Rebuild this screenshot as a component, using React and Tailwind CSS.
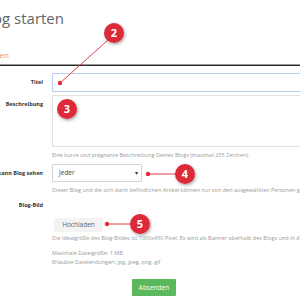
export default function App() {
  return (
    <div className="relative w-[300px] h-[300px] overflow-hidden bg-white text-[#555]" style={{ fontFamily: '"Open Sans", "Liberation Sans", sans-serif' }}>
      {/* page heading */}
      <div className="pt-[4px] h-[46px] flex w-[64px] justify-end">
        <h1 className="whitespace-nowrap text-[15px] leading-[28px] font-normal text-[#666]">Blog starten</h1>
      </div>
      <div className="flex w-[9px] justify-end h-[18px] items-center">
        <span className="whitespace-nowrap text-[8px] text-[#e98a74]">Eigenschaften</span>
      </div>
      <div className="border-t border-[#999] h-[2px] bg-[#2a2a2a]" />

      {/* form */}
      <div className="grid grid-cols-[43px_300px] gap-x-[9px] pt-[7px] text-[5.5px]">
        <Label className="h-[19px] items-center">Titel</Label>
        <div className="h-[19px] border border-[#b4cdf3] rounded-[1px]" />

        <Label className="mt-[3px] pt-[5px]">Beschreibung</Label>
        <div className="mt-[3px] h-[52px] border border-[#e2e2e2]" />

        <div />
        <p className="mt-[4px] leading-[8px] text-[#9a9a9a]">Eine kurze und prägnante Beschreibung Deines Blogs (maximal 255 Zeichen).</p>

        <Label className="mt-[5px] h-[18px] items-center">Wer kann Blog sehen</Label>
        <div className="mt-[5px] h-[18px] w-[90px] border border-[#d4d4d4] rounded-[1px] flex items-center justify-between pl-[6px] pr-[3px]">
          <span className="text-[6.5px] text-[#444]">Jeder</span>
          <span className="text-[6px] text-[#333]">▾</span>
        </div>

        <div />
        <p className="mt-[4px] leading-[8px] text-[#9a9a9a] whitespace-nowrap">Dieser Blog und die sich darin befindlichen Artikel können nur von den ausgewählten Personen gesehen werden.</p>

        <Label className="mt-[7px] h-[8px] items-center">Blog-Bild</Label>
        <div className="mt-[7px]" />

        <div />
        <div className="mt-[9px]">
          <button className="ml-[2px] w-[49px] h-[14px] bg-[#f3f3f3] text-[6.5px] text-[#666] rounded-[1px]">Hochladen</button>
          <p className="mt-[2px] leading-[8px] text-[#9a9a9a] whitespace-nowrap">Die Idealgröße des Blog-Bildes ist 1000x450 Pixel. Es wird als Banner oberhalb des Blogs und in der Übersicht angezeigt.</p>
          <p className="mt-[7px] leading-[9px] text-[#9a9a9a]">
            Maximale Dateigröße: 1 MB<br />Erlaubte Dateiendungen: jpg, jpeg, png, gif
          </p>
          <button className="mt-[12px] ml-[80px] w-[44px] h-[17px] bg-[#5cb85c] text-white text-[6.5px] rounded-[1px]">Absenden</button>
        </div>
      </div>

      {/* annotation callouts */}
      <svg className="absolute inset-0 pointer-events-none" width="300" height="300" viewBox="0 0 300 300">
        <defs>
          <filter id="sh" x="-50%" y="-50%" width="200%" height="200%">
            <feDropShadow dx="1" dy="1.5" stdDeviation="1.5" floodColor="#000" floodOpacity="0.35" />
          </filter>
        </defs>
        <g stroke="#e63946" strokeWidth="1">
          <line x1="60" y1="83" x2="108" y2="40" />
          <line x1="148" y1="174" x2="176" y2="174" />
          <line x1="107" y1="224" x2="131" y2="224" />
        </g>
        <g fill="#e02c3a">
          <circle cx="60" cy="83" r="2.2" />
          <circle cx="148" cy="174" r="2.2" />
          <circle cx="107" cy="224" r="2.2" />
        </g>
        {[
          [114, 33, "2"],
          [67, 109, "3"],
          [185, 174, "4"],
          [140, 224, "5"],
        ].map(([cx, cy, n]) => (
          <g key={n}>
            <circle cx={cx} cy={cy} r="10" fill="#dc2a38" filter="url(#sh)" />
            <text x={cx} y={cy + 4} textAnchor="middle" fill="#fff" fontSize="11" fontWeight="700" fontFamily='"Open Sans", sans-serif'>{n}</text>
          </g>
        ))}
      </svg>
    </div>
  );
}

function Label({ children, className = "" }) {
  return (
    <div className={`flex justify-end ${className}`}>
      <span className="whitespace-nowrap font-bold text-[#333] text-[5.5px]">{children}</span>
    </div>
  );
}
